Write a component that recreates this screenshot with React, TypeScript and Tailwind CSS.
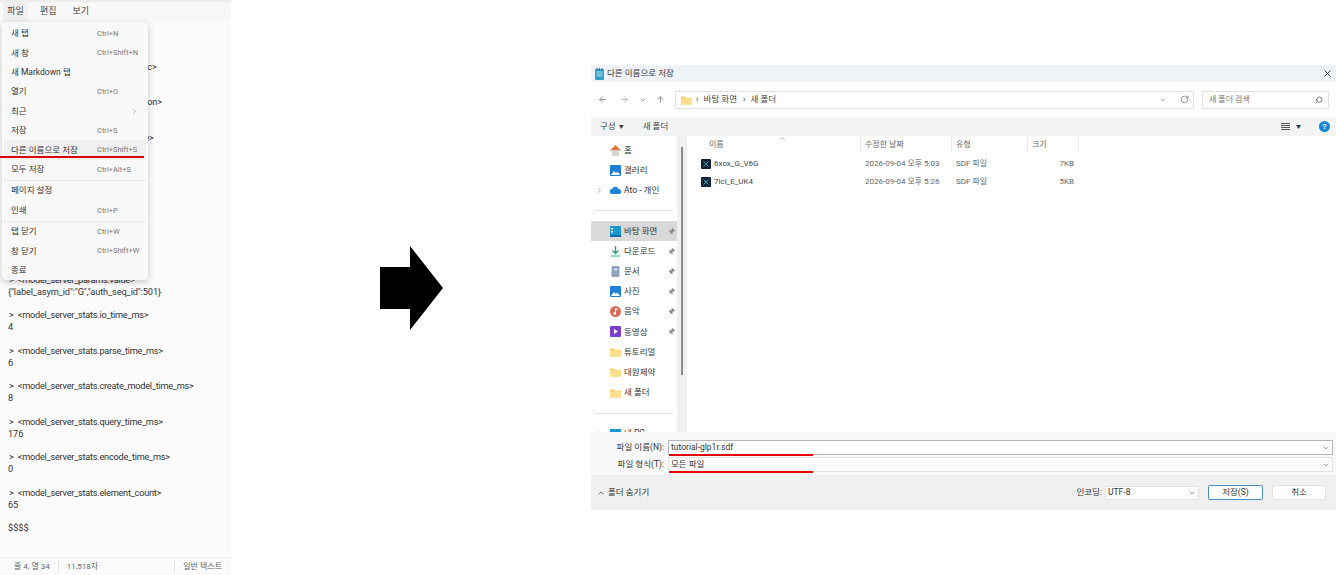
import { ChevronDown, ChevronRight, ChevronUp, ArrowLeft, ArrowRight, ArrowUp, RotateCw, Search, X, Pin } from "lucide-react";
import type { ReactNode } from "react";

const FONT = "font-['Roboto','Noto_Sans_CJK_KR',sans-serif]";

const DOC: [string, string][] = [
  ["<model_server_result.job_id>", "kH2vQ0xJb7Tn4mLs"],
  ["<model_server_result.datetime_utc>", "2026-09-04 08:03:12"],
  ["<model_server_result.server_version>", "0.9.12"],
  ["<model_server_result.query_name>", "ligand"],
  ["<model_server_result.source_id>", "pdb-bcif"],
  ["<model_server_result.entry_id>", "7LCI"],
  ["<model_server_params.name>", "atom_site"],
  ["<model_server_params.value>", '{"label_asym_id":"G","auth_seq_id":501}'],
  ["<model_server_stats.io_time_ms>", "4"],
  ["<model_server_stats.parse_time_ms>", "6"],
  ["<model_server_stats.create_model_time_ms>", "8"],
  ["<model_server_stats.query_time_ms>", "176"],
  ["<model_server_stats.encode_time_ms>", "0"],
  ["<model_server_stats.element_count>", "65"],
];

const MENU: { label: string; key?: string; arrow?: boolean; hover?: boolean; rule?: boolean }[] = [
  { label: "새 탭", key: "Ctrl+N" },
  { label: "새 창", key: "Ctrl+Shift+N" },
  { label: "새 Markdown 탭" },
  { label: "열기", key: "Ctrl+O" },
  { label: "최근", arrow: true },
  { label: "저장", key: "Ctrl+S" },
  { label: "다른 이름으로 저장", key: "Ctrl+Shift+S", hover: true },
  { label: "모두 저장", key: "Ctrl+Alt+S", rule: true },
  { label: "페이지 설정" },
  { label: "인쇄", key: "Ctrl+P", rule: true },
  { label: "탭 닫기", key: "Ctrl+W" },
  { label: "창 닫기", key: "Ctrl+Shift+W" },
  { label: "종료" },
];

function Folder() {
  return (
    <svg width="11" height="10" viewBox="0 0 11 10">
      <path d="M0 1.5h4l1 1.2h6V9.5H0z" fill="#f6cf63" />
      <path d="M0 3.4h11v6.1H0z" fill="#fbe08f" />
    </svg>
  );
}

function Tile({ color, children }: { color: string; children?: ReactNode }) {
  return (
    <svg width="11" height="11" viewBox="0 0 11 11">
      <rect width="11" height="11" rx="1" fill={color} />
      {children}
    </svg>
  );
}

const Photo = (
  <Tile color="#1f7fd6">
    <path d="M1 10l3-4 2 2 1.5-1.5L10 10z" fill="#fff" />
  </Tile>
);

const PLACES: { label: string; icon: ReactNode; pin?: boolean; active?: boolean }[] = [
  {
    label: "바탕 화면", pin: true, active: true,
    icon: (
      <Tile color="#1a97cf">
        <path d="M1 2h2v1.5H1zM1 5h2v1.5H1z" fill="#fff" />
        <path d="M0 9h11v2H0z" fill="#0e6fa8" />
      </Tile>
    ),
  },
  {
    label: "다운로드", pin: true,
    icon: (
      <svg width="11" height="11" viewBox="0 0 11 11">
        <path d="M5.5 0v7M2.5 4.5l3 3 3-3" stroke="#2aa37a" strokeWidth="1.4" fill="none" />
        <path d="M1 10h9" stroke="#5cc8c0" strokeWidth="1.4" />
      </svg>
    ),
  },
  {
    label: "문서", pin: true,
    icon: (
      <svg width="11" height="11" viewBox="0 0 11 11">
        <rect x="1.5" width="8" height="11" rx="1" fill="#8ea3bd" />
        <path d="M4 2.5h3.5v2H4z" fill="#d8e0ea" />
      </svg>
    ),
  },
  { label: "사진", pin: true, icon: Photo },
  {
    label: "음악", pin: true,
    icon: (
      <svg width="11" height="11" viewBox="0 0 11 11">
        <circle cx="5.5" cy="5.5" r="5.5" fill="#dc6a5a" />
        <path d="M5 2.5h2.5V4H6v3.5a1.3 1.3 0 1 1-1-1.2z" fill="#fff" />
      </svg>
    ),
  },
  {
    label: "동영상", pin: true,
    icon: (
      <Tile color="#7a3fd0">
        <path d="M4 3l4 2.5L4 8z" fill="#fff" />
      </Tile>
    ),
  },
  { label: "튜토리얼", icon: <Folder /> },
  { label: "대원제약", icon: <Folder /> },
  { label: "새 폴더", icon: <Folder /> },
];

function SdfIcon() {
  return (
    <svg width="10" height="10" viewBox="0 0 10 10">
      <rect width="10" height="10" rx="1" fill="#14233a" />
      <path d="M2.5 2.5L5 5.2 7.5 2.8M5 5.2L7.5 7.5M5 5.2L2.6 7.6" stroke="#38b6c9" strokeWidth="0.9" fill="none" />
    </svg>
  );
}

function PlaceRow({ label, icon, pin, active }: { label: string; icon: ReactNode; pin?: boolean; active?: boolean }) {
  return (
    <div className={`h-[20.2px] shrink-0 flex items-center pl-[19px] pr-[2px] ${active ? "bg-[#d9d9d9]" : ""}`}>
      <span className="w-[11px] h-[11px] flex items-center justify-center">{icon}</span>
      <span className="ml-[3px] text-[8.5px] text-[#333] flex-1">{label}</span>
      {pin && <Pin size={7} className="text-[#8a8a8a] fill-[#8a8a8a] rotate-45" />}
    </div>
  );
}

function SaveDialog() {
  return (
    <div className="flex-1 h-[445px] flex flex-col bg-white text-[#444]">
      <div className="h-[17px] shrink-0 bg-[#eff3f7] flex items-center pl-[4px] pr-[3px]">
        <svg width="9" height="12" viewBox="0 0 9 12">
          <rect y="1" width="9" height="11" rx="1" fill="#2f9fc4" />
          <path d="M1.5 4h6M1.5 6h6M1.5 8h6" stroke="#d7f0f7" strokeWidth="0.8" />
          <path d="M2 0v2M4.5 0v2M7 0v2" stroke="#24506a" strokeWidth="0.8" />
        </svg>
        <span className="ml-[3px] mb-[1px] text-[8.5px] text-[#333]">다른 이름으로 저장</span>
        <X size={11} className="ml-auto text-[#333]" />
      </div>

      <div className="h-[35px] shrink-0 flex items-center pl-[7px] pr-[6px] text-[#777]">
        <ArrowLeft size={9} />
        <ArrowRight size={9} className="ml-[13px] text-[#aaa]" />
        <ChevronDown size={8} className="ml-[10px]" />
        <ArrowUp size={9} className="ml-[9px]" />
        <div className="ml-[10px] w-[519px] h-[18px] border border-[#e3e3e3] flex items-center pl-[5px] pr-[4px]">
          <Folder />
          <span className="ml-[4px] text-[8.5px] text-[#444]">›</span>
          <span className="ml-[5px] text-[8.5px] text-[#444]">바탕 화면</span>
          <span className="ml-[6px] text-[8.5px] text-[#444]">›</span>
          <span className="ml-[5px] text-[8.5px] text-[#444]">새 폴더</span>
          <ChevronDown size={8} className="ml-auto text-[#888]" />
          <RotateCw size={9} className="ml-[13px] text-[#777]" />
        </div>
        <div className="ml-[8px] w-[127px] h-[18px] border border-[#e3e3e3] flex items-center pl-[6px] pr-[5px]">
          <span className="text-[8px] text-[#777]">새 폴더 검색</span>
          <Search size={8} className="ml-auto text-[#444] -scale-x-100" />
        </div>
      </div>

      <div className="h-[19px] shrink-0 bg-[#f3f4f6] flex items-center pl-[9px] pr-[6px] text-[8.5px] text-[#444]">
        <span>구성</span>
        <span className="ml-[3px] text-[5px]">▼</span>
        <span className="ml-[19px]">새 폴더</span>
        <svg className="ml-auto" width="9" height="8" viewBox="0 0 9 8">
          <path d="M0 .5h9M0 2.5h9M0 4.5h9M0 6.5h9" stroke="#555" strokeWidth="1" />
        </svg>
        <span className="ml-[6px] text-[5px] text-[#1c3355]">▼</span>
        <span className="ml-[18px] w-[11px] h-[11px] rounded-full bg-[#1a86d8] text-white text-[8px] font-bold flex items-center justify-center">?</span>
      </div>

      <div className="h-[296px] shrink-0 flex overflow-hidden">
        <div className="w-[86px] shrink-0 flex flex-col overflow-hidden pt-[4px]">
          <div className="h-[20.2px] shrink-0 flex items-center pl-[19px] text-[8.5px] text-[#333]">
            <svg width="11" height="11" viewBox="0 0 11 11">
              <path d="M0 5.5L5.5 0 11 5.5z" fill="#e8743b" />
              <path d="M2 5h7v6H2z" fill="#d9d4cc" />
            </svg>
            <span className="ml-[3px]">홈</span>
          </div>
          <div className="h-[20.2px] shrink-0 flex items-center pl-[19px] text-[8.5px] text-[#333]">
            {Photo}
            <span className="ml-[3px]">갤러리</span>
          </div>
          <div className="h-[20.2px] shrink-0 flex items-center pl-[5px] text-[8.5px] text-[#333]">
            <ChevronRight size={7} className="text-[#777]" />
            <svg className="ml-[7px]" width="11" height="8" viewBox="0 0 11 8">
              <path d="M2.5 8a2.5 2.5 0 0 1-.4-5A3.5 3.5 0 0 1 8.6 3 2.5 2.5 0 0 1 8.5 8z" fill="#1e84dc" />
            </svg>
            <span className="ml-[3px]">Ato - 개인</span>
          </div>
          <div className="h-[20.4px] shrink-0 flex items-center px-[4px]">
            <div className="w-full h-px bg-[#e3e3e3]" />
          </div>
          {PLACES.map(p => <PlaceRow key={p.label} {...p} />)}
          <div className="h-[21px] shrink-0 flex items-center px-[4px]">
            <div className="w-full h-px bg-[#e3e3e3]" />
          </div>
          <div className="h-[20.2px] shrink-0 flex items-center pl-[5px] text-[8.5px] text-[#333]">
            <ChevronRight size={7} className="text-[#777]" />
            <svg className="ml-[7px]" width="11" height="10" viewBox="0 0 11 10">
              <rect width="11" height="8" fill="#1a97cf" />
            </svg>
            <span className="ml-[3px]">내 PC</span>
          </div>
        </div>

        <div className="w-[10px] shrink-0 bg-[#f0f0f0] flex justify-center pt-[11px]">
          <div className="w-[2px] h-[228px] bg-[#8c8c8c]" />
        </div>

        <div className="flex-1 flex flex-col">
          <div className="h-[17px] shrink-0 flex text-[8px] text-[#666]">
            <div className="w-[174px] pl-[22px] pt-[1px] border-r border-[#ececec] flex items-center relative">
              이름
              <ChevronUp size={7} className="absolute left-[92px] top-[-1px] text-[#888]" />
            </div>
            <div className="w-[91px] pl-[4px] pt-[1px] border-r border-[#ececec] flex items-center">수정한 날짜</div>
            <div className="w-[76px] pl-[4px] pt-[1px] border-r border-[#ececec] flex items-center">유형</div>
            <div className="w-[51px] pl-[4px] pt-[1px] border-r border-[#ececec] flex items-center">크기</div>
          </div>
          <div className="pt-[2px]">
            {[["6xox_G_V6G", "2026-09-04 오후 5:03", "7KB"], ["7lci_E_UK4", "2026-09-04 오후 5:26", "5KB"]].map(r => (
              <div key={r[0]} className="h-[18px] flex items-center text-[8px] text-[#666]">
                <div className="w-[174px] pl-[14px] flex items-center text-[#444]">
                  <SdfIcon />
                  <span className="ml-[3px]">{r[0]}</span>
                </div>
                <div className="w-[91px] pl-[4px]">{r[1]}</div>
                <div className="w-[76px] pl-[4px]">SDF 파일</div>
                <div className="w-[46px] text-right">{r[2]}</div>
              </div>
            ))}
          </div>
        </div>
      </div>

      <div className="h-[43px] shrink-0 bg-[#f9f9f9] pt-[8px] pr-[3px] flex flex-col gap-[2px] text-[8.5px] text-[#333]">
        <div className="flex items-center h-[15px]">
          <span className="w-[73px] text-right whitespace-nowrap">파일 이름(N):</span>
          <div className="ml-[4px] flex-1 h-[15px] bg-white border border-[#b5b5b5] flex items-center pl-[2px] pr-[2px] relative">
            tutorial-glp1r.sdf
            <ChevronDown size={8} className="ml-auto text-[#777]" />
            <span className="absolute left-0 bottom-[-2px] w-[144px] h-[2px] bg-[#e60000]" />
          </div>
        </div>
        <div className="flex items-center h-[15px]">
          <span className="w-[73px] text-right whitespace-nowrap">파일 형식(T):</span>
          <div className="ml-[4px] flex-1 h-[15px] bg-[#fbfbfb] border border-[#e3e3e3] flex items-center pl-[2px] pr-[2px] relative">
            모든 파일
            <ChevronDown size={8} className="ml-auto text-[#777]" />
            <span className="absolute left-0 bottom-[-2px] w-[144px] h-[2px] bg-[#e60000]" />
          </div>
        </div>
      </div>

      <div className="flex-1 bg-[#f0f0f0] flex items-center pl-[6px] pr-[10px] text-[8.5px] text-[#333]">
        <ChevronUp size={8} />
        <span className="ml-[3px]">폴더 숨기기</span>
        <span className="ml-auto">인코딩:</span>
        <div className="ml-[3px] w-[94px] h-[14px] bg-white border border-[#e3e3e3] flex items-center pl-[2px] pr-[2px]">
          UTF-8
          <ChevronDown size={8} className="ml-auto text-[#777]" />
        </div>
        <button className="ml-[9px] w-[55px] h-[15px] bg-white border border-[#4a90c8] rounded-[2px]">저장(S)</button>
        <button className="ml-[9px] w-[54px] h-[15px] bg-white border border-[#e3e3e3] rounded-[2px]">취소</button>
      </div>
    </div>
  );
}

export default function App() {
  return (
    <div className={`${FONT} w-[1336px] h-[575px] bg-white flex items-start overflow-hidden`}>
      <div className="w-[231px] h-[575px] shrink-0 bg-[#fbfbfb] flex flex-col relative">
        <div className="h-[2px] shrink-0 bg-[#ececec]" />
        <div className="h-[20px] shrink-0 bg-[#f8f8f8] flex items-center pl-[3px] text-[9px] text-[#444]">
          <span className="w-[25px] h-[20px] bg-[#f0f0f0] rounded-[2px] flex items-center justify-center">파일</span>
          <span className="ml-[12px]">편집</span>
          <span className="ml-[16px]">보기</span>
        </div>

        <div className="flex-1 overflow-hidden pl-[8px] pt-[3px] text-[9.2px] leading-[11.85px] text-[#333]">
          {DOC.map(([head, value]) => (
            <div key={head} className="mb-[11.85px]">
              <div className="whitespace-pre pl-[1px]">
                {">"}
                <span className="ml-[4px] tracking-[-0.25px]">{head}</span>
              </div>
              <div className="tracking-[-0.1px]">{value}</div>
            </div>
          ))}
          <div>$$$$</div>
        </div>

        <div className="h-[18px] shrink-0 border-t border-[#ececec] flex items-center pl-[14px] pr-[9px] text-[8px] text-[#666]">
          <span>줄 4, 열 34</span>
          <span className="ml-[8px] pl-[8px] border-l border-[#e3e3e3]">11,518자</span>
          <span className="ml-auto pl-[8px] border-l border-[#e3e3e3]">일반 텍스트</span>
        </div>

        <div className="absolute left-[2px] top-[22px] w-[146px] h-[258px] bg-[#f9f9f9] rounded-[4px] shadow-[0_2px_6px_rgba(0,0,0,0.22)] py-[2px] px-[2px] flex flex-col text-[8.5px] text-[#333]">
          {MENU.map(m => (
            <div key={m.label} className={m.rule ? "border-b border-[#e8e8e8] pb-[1px]" : ""}>
              <div className={`h-[19.4px] flex items-center pl-[7px] pr-[8px] rounded-[3px] ${m.hover ? "bg-[#f0f0f0]" : ""}`}>
                <span>{m.label}</span>
                {m.key && <span className="absolute left-[95px] text-[7.5px] text-[#777]">{m.key}</span>}
                {m.arrow && <ChevronRight size={7} className="ml-auto text-[#888]" />}
              </div>
            </div>
          ))}
        </div>
        <div className="absolute left-0 top-[156px] w-[144px] h-[2px] bg-[#d90000]" />
      </div>

      <div className="w-[360px] h-[575px] shrink-0 flex items-center justify-center">
        <svg className="mt-[1px]" width="63" height="84" viewBox="0 0 63 84">
          <path d="M0 21h30V0l33 42-33 42V63H0z" fill="#000" />
        </svg>
      </div>

      <div className="flex-1 pt-[65px] flex">
        <SaveDialog />
      </div>
    </div>
  );
}
